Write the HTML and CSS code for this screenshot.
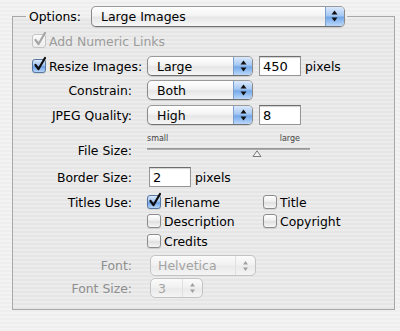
FILE: index.html
```html
<!DOCTYPE html>
<html>
<head>
<meta charset="utf-8">
<link rel="stylesheet" href="styles.css">
</head>
<body>
<div class="panel">
  <fieldset class="group">
    <legend class="legend">
      <div class="legend-in">
        <span class="lbl">Options:</span>
        <div class="popup wide">
          <span class="val">Large Images</span>
          <span class="arrows"><svg width="7" height="12" viewBox="0 0 7 12"><path d="M0.5 4.5 L3.5 0.5 L6.5 4.5Z M0.5 7.5 L3.5 11.5 L6.5 7.5Z"/></svg></span>
        </div>
      </div>
    </legend>

    <div class="row r1">
      <span class="cb checked off"><svg class="mark" width="14" height="16" viewBox="0 0 14 16"><path d="M2.5 9 L5.5 13 L12 2"/></svg></span>
      <span class="dim">Add Numeric Links</span>
    </div>

    <div class="row r2">
      <div class="check-label">
        <span class="cb checked"><svg class="mark" width="14" height="16" viewBox="0 0 14 16"><path d="M2.5 9 L5.5 13 L12 2"/></svg></span>
        <span>Resize Images:</span>
      </div>
      <div class="popup std">
        <span class="val">Large</span>
        <span class="arrows"><svg width="7" height="12" viewBox="0 0 7 12"><path d="M0.5 4.5 L3.5 0.5 L6.5 4.5Z M0.5 7.5 L3.5 11.5 L6.5 7.5Z"/></svg></span>
      </div>
      <div class="field f-after">450</div>
      <span class="unit">pixels</span>
    </div>

    <div class="row r3">
      <span class="label">Constrain:</span>
      <div class="popup std">
        <span class="val">Both</span>
        <span class="arrows"><svg width="7" height="12" viewBox="0 0 7 12"><path d="M0.5 4.5 L3.5 0.5 L6.5 4.5Z M0.5 7.5 L3.5 11.5 L6.5 7.5Z"/></svg></span>
      </div>
    </div>

    <div class="row r4">
      <span class="label">JPEG Quality:</span>
      <div class="popup std">
        <span class="val">High</span>
        <span class="arrows"><svg width="7" height="12" viewBox="0 0 7 12"><path d="M0.5 4.5 L3.5 0.5 L6.5 4.5Z M0.5 7.5 L3.5 11.5 L6.5 7.5Z"/></svg></span>
      </div>
      <div class="field f-after">8</div>
    </div>

    <div class="row r5">
      <span class="label"></span>
      <div class="ticks"><span>small</span><span>large</span></div>
    </div>

    <div class="row r6">
      <span class="label">File Size:</span>
      <div class="slider">
        <div class="track"></div>
        <svg class="thumb" width="10" height="7" viewBox="0 0 10 7"><path d="M1 6.5 L5 0.8 L9 6.5Z"/></svg>
      </div>
    </div>

    <div class="row r7">
      <span class="label">Border Size:</span>
      <div class="field f-border">2</div>
      <span class="unit">pixels</span>
    </div>

    <div class="row r8">
      <span class="label">Titles Use:</span>
      <div class="opt">
        <span class="cb checked"><svg class="mark" width="14" height="16" viewBox="0 0 14 16"><path d="M2.5 9 L5.5 13 L12 2"/></svg></span>
        <span>Filename</span>
      </div>
      <div class="opt">
        <span class="cb"></span>
        <span>Title</span>
      </div>
    </div>

    <div class="row r9">
      <span class="label"></span>
      <div class="opt">
        <span class="cb"></span>
        <span>Description</span>
      </div>
      <div class="opt">
        <span class="cb"></span>
        <span>Copyright</span>
      </div>
    </div>

    <div class="row r10">
      <span class="label"></span>
      <div class="opt">
        <span class="cb"></span>
        <span>Credits</span>
      </div>
    </div>

    <div class="row r11">
      <span class="label dim2">Font:</span>
      <div class="popup dis font-pop">
        <span class="val">Helvetica</span>
        <span class="arrows"><svg width="7" height="12" viewBox="0 0 7 12"><path d="M1 4.5 L3.5 1 L6 4.5Z M1 7.5 L3.5 11 L6 7.5Z"/></svg></span>
      </div>
    </div>

    <div class="row r12">
      <span class="label dim2">Font Size:</span>
      <div class="popup dis size-pop">
        <span class="val">3</span>
        <span class="arrows"><svg width="7" height="12" viewBox="0 0 7 12"><path d="M1 4.5 L3.5 1 L6 4.5Z M1 7.5 L3.5 11 L6 7.5Z"/></svg></span>
      </div>
    </div>
  </fieldset>
</div>
</body>
</html>
```

FILE: styles.css
```css
* { box-sizing: border-box; }
html, body { margin: 0; }
body {
  width: 400px;
  height: 331px;
  overflow: hidden;
  font-family: "DejaVu Sans", sans-serif;
  font-size: 12.4px;
  color: #000;
  background: repeating-linear-gradient(#f3f3f3 0 2px, #eeeeee 2px 4px);
}
.panel { padding: 5px 0 0 12px; }
.group {
  margin: 0;
  padding: 0;
  width: 383px;
  height: 305px;
  min-width: 0;
  border: 1px solid #a8a8a8;
  background: repeating-linear-gradient(#ececec 0 2px, #e5e5e5 2px 4px);
}
.legend {
  margin-left: 13px;
  padding: 0 2px 0 3px;
  height: 22px;
}
.legend-in {
  display: flex;
  align-items: center;
  height: 22px;
  gap: 10px;
}
.row {
  display: flex;
  align-items: center;
}
.label {
  width: 119px;
  margin-right: 15px;
  text-align: right;
  flex: none;
}
.check-label {
  width: 134px;
  padding-left: 19px;
  display: flex;
  align-items: center;
  gap: 3px;
  flex: none;
  white-space: nowrap;
}
.dim { color: #9c9c9c; }
.dim2 { color: #8e8e8e; }

.r1 { margin-top: 6px; height: 16px; padding-left: 19px; gap: 3px; }
.r2 { margin-top: 6px; height: 22px; }
.r3 { margin-top: 3px; height: 20px; }
.r4 { margin-top: 5px; height: 20px; }
.r5 { margin-top: 8px; height: 11px; }
.r6 { height: 12px; }
.r7 { margin-top: 11px; height: 20px; }
.r8 { margin-top: 7px; height: 16px; }
.r9 { margin-top: 3px; height: 16px; }
.r10 { margin-top: 4px; height: 16px; }
.r11 { margin-top: 6px; height: 21px; }
.r12 { margin-top: 2px; height: 20px; }

/* popup buttons */
.popup {
  display: flex;
  align-items: stretch;
  height: 20px;
  border: 1px solid #8a8a8a;
  border-top-color: #9a9a9a;
  border-bottom-color: #6f6f6f;
  border-radius: 5px;
  overflow: hidden;
  background: linear-gradient(#ffffff, #f3f3f3 45%, #e6e6e6 55%, #f7f7f7);
  box-shadow: 0 1px 1px rgba(0, 0, 0, 0.12);
  flex: none;
}
.popup.wide { width: 254px; height: 21px; }
.popup.std { width: 106px; }
.popup .val {
  flex: 1;
  display: flex;
  align-items: center;
  padding-left: 9px;
  font-size: 12.5px;
}
.popup .arrows {
  width: 19px;
  display: flex;
  align-items: center;
  justify-content: center;
  border-left: 1px solid #7c9fcc;
  background: linear-gradient(#dbe9fc, #a6c8f2 45%, #74a8ea 55%, #bcd8fa);
}
.popup .arrows svg { fill: #111; }

.popup.dis {
  border-color: #c3c3c3;
  box-shadow: none;
  background: linear-gradient(#fbfbfb, #f1f1f1 45%, #eaeaea 55%, #f4f4f4);
  margin-left: 3px;
}
.popup.dis .val { color: #a3a3a3; padding-left: 7px; }
.popup.dis .arrows {
  background: none;
  border-left: 1px solid #e0e0e0;
  width: 20px;
}
.popup.dis .arrows svg { fill: #a0a0a0; }
.font-pop { width: 106px; height: 21px; }
.size-pop { width: 53px; }

/* text fields */
.field {
  width: 42px;
  height: 20px;
  border: 1px solid #969696;
  border-top-color: #6e6e6e;
  background: #fff;
  box-shadow: inset 0 1px 1px rgba(0, 0, 0, 0.18);
  padding-left: 3px;
  font-size: 13px;
  display: flex;
  align-items: center;
  flex: none;
}
.f-after { margin-left: 6px; }
.f-border { margin-left: 2px; }
.unit { margin-left: 4px; }

/* checkboxes */
.cb {
  position: relative;
  width: 14px;
  height: 14px;
  flex: none;
  border: 1px solid #8c8c8c;
  border-radius: 3px;
  background: linear-gradient(#ffffff, #efefef 45%, #e0e0e0 55%, #f6f6f6);
  box-shadow: 0 1px 1px rgba(0, 0, 0, 0.1);
}
.cb.checked {
  border-color: #56779f;
  background: linear-gradient(#dce9fb, #9fc3f0 45%, #6aa0e6 55%, #b8d5f8);
}
.cb.checked.off {
  border-color: #c4c4c4;
  background: linear-gradient(#fafafa, #eeeeee);
  box-shadow: none;
}
.cb .mark {
  position: absolute;
  left: 0;
  top: -4px;
  fill: none;
  stroke: #0d0d0d;
  stroke-width: 2.2;
  stroke-linecap: round;
  stroke-linejoin: round;
}
.cb.off .mark { stroke: #a6a6a6; }

.opt {
  width: 116px;
  display: flex;
  align-items: center;
  gap: 3px;
  flex: none;
}

/* slider */
.ticks {
  width: 153px;
  display: flex;
  justify-content: space-between;
  font-size: 8px;
  line-height: 11px;
  color: #444;
}
.slider {
  position: relative;
  width: 163px;
  height: 12px;
}
.track {
  margin-top: 4px;
  height: 2px;
  background: linear-gradient(#8c8c8c, #b8b8b8);
}
.thumb {
  position: absolute;
  left: 105px;
  top: 6px;
  fill: #f2f2f2;
  stroke: #7a7a7a;
  stroke-width: 1;
}
```
